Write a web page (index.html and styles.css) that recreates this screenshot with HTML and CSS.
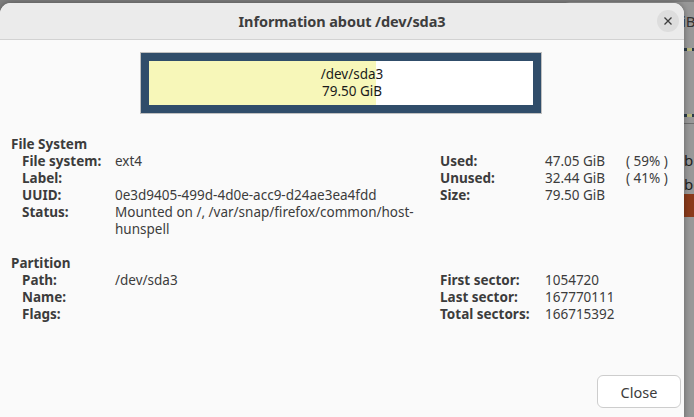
FILE: index.html
```html
<!DOCTYPE html>
<html>
<head>
<meta charset="utf-8">
<link rel="stylesheet" href="styles.css">
</head>
<body>
<div class="desktop">
  <div class="backwin">
    <div class="bw-top">iB</div>
    <div class="bw-dash bw-dash1"></div>
    <div class="bw-dash bw-dash2"></div>
    <div class="bw-line"></div>
    <div class="bw-text bw-t1">bi</div>
    <div class="bw-text bw-t2">bo</div>
    <div class="bw-bar"></div>
  </div>
  <div class="dialog">
    <div class="titlebar">
      <span class="title">Information about /dev/sda3</span>
      <button class="xbtn" aria-label="Close">
        <svg width="10" height="10" viewBox="0 0 10 10"><path d="M1.5 1.5L8.5 8.5M8.5 1.5L1.5 8.5" stroke="#3d3d3d" stroke-width="1.3" fill="none"/></svg>
      </button>
    </div>
    <div class="content">
      <div class="graphic">
        <div class="frame">
          <div class="used"></div>
          <div class="glabel">/dev/sda3<br>79.50 GiB</div>
        </div>
      </div>

      <div class="section fs">
        <div class="heading">File System</div>
        <div class="cols">
          <div class="grid left">
            <div class="lbl">File system:</div><div class="val">ext4</div>
            <div class="lbl">Label:</div><div class="val"></div>
            <div class="lbl">UUID:</div><div class="val">0e3d9405-499d-4d0e-acc9-d24ae3ea4fdd</div>
            <div class="lbl">Status:</div><div class="val">Mounted on /, /var/snap/firefox/common/host-<br>hunspell</div>
          </div>
          <div class="grid right3">
            <div class="lbl">Used:</div><div class="val">47.05 GiB</div><div class="pct">( 59% )</div>
            <div class="lbl">Unused:</div><div class="val">32.44 GiB</div><div class="pct">( 41% )</div>
            <div class="lbl">Size:</div><div class="val">79.50 GiB</div><div class="pct"></div>
          </div>
        </div>
      </div>

      <div class="section part">
        <div class="heading">Partition</div>
        <div class="cols">
          <div class="grid left">
            <div class="lbl">Path:</div><div class="val">/dev/sda3</div>
            <div class="lbl">Name:</div><div class="val"></div>
            <div class="lbl">Flags:</div><div class="val"></div>
          </div>
          <div class="grid right2">
            <div class="lbl">First sector:</div><div class="val">1054720</div>
            <div class="lbl">Last sector:</div><div class="val">167770111</div>
            <div class="lbl">Total sectors:</div><div class="val">166715392</div>
          </div>
        </div>
      </div>

      <div class="actions">
        <button class="closebtn">Close</button>
      </div>
    </div>
  </div>
</div>
</body>
</html>
```

FILE: styles.css
```css
* { box-sizing: border-box; }
html, body {
  margin: 0;
  padding: 0;
  width: 694px;
  height: 417px;
  overflow: hidden;
}
body {
  background: #7e7e7e;
  font-family: "Noto Sans", "DejaVu Sans", sans-serif;
  font-size: 13.5px;
  color: #3c3c3c;
}
.desktop {
  position: relative;
  width: 694px;
  height: 417px;
  overflow: hidden;
}
.backwin {
  position: absolute;
  left: 560px;
  top: 2px;
  width: 134px;
  height: 415px;
  background: #989898;
  border-radius: 10px 0 0 0;
  overflow: hidden;
}
.bw-top {
  position: absolute;
  left: 122px;
  top: 9px;
  font-size: 15px;
  color: #333;
}
.bw-dash {
  position: absolute;
  left: 124px;
  width: 80px;
  height: 3px;
  background: repeating-linear-gradient(90deg, #2a3b4a 0 3px, #b8b77e 3px 8px);
}
.bw-dash1 { top: 46px; }
.bw-dash2 { top: 112px; }
.bw-line {
  position: absolute;
  left: 124px;
  top: 121px;
  width: 80px;
  height: 1px;
  background: #6e6e6e;
}
.bw-text {
  position: absolute;
  left: 124px;
  font-size: 15px;
  color: #222;
}
.bw-t1 { top: 148px; }
.bw-t2 { top: 172px; }
.bw-bar {
  position: absolute;
  left: 124px;
  top: 192px;
  width: 80px;
  height: 23px;
  background: #8a3a1b;
}
.dialog {
  position: absolute;
  left: 0;
  top: 3px;
  width: 684px;
  height: 430px;
  background: #fafafa;
  border-radius: 11px 11px 0 0;
  overflow: hidden;
  box-shadow: 0 0 6px rgba(0,0,0,0.35);
}
.titlebar {
  position: relative;
  height: 37px;
  background: #ebebeb;
  border-bottom: 1px solid #d2d2d2;
  display: flex;
  align-items: center;
  justify-content: center;
}
.title {
  font-weight: bold;
  font-size: 14.5px;
  color: #3d3d3d;
  letter-spacing: -0.1px;
}
.xbtn {
  position: absolute;
  right: 5px;
  top: 7px;
  width: 22px;
  height: 22px;
  border-radius: 50%;
  border: none;
  background: #dddddd;
  padding: 0;
  display: flex;
  align-items: center;
  justify-content: center;
}
.content {
  padding: 12px 0 0 11px;
}
.graphic {
  width: 402px;
  height: 62px;
  margin: 0 auto 0 129px;
  border: 1px solid #c0c0c0;
}
.frame {
  position: relative;
  width: 100%;
  height: 100%;
  border: 8px solid #304d6a;
  background: #ffffff;
}
.used {
  position: absolute;
  left: 0;
  top: 0;
  bottom: 0;
  width: 227px;
  background: #f7f7b9;
}
.glabel {
  position: relative;
  text-align: center;
  line-height: 17px;
  padding-top: 5px;
  color: #1a1a1a;
  margin-left: 22px;
}
.section {
  line-height: 17px;
}
.fs { margin-top: 22px; }
.part { margin-top: 17px; }
.heading {
  font-weight: bold;
}
.cols {
  display: flex;
  align-items: flex-start;
  padding-left: 11px;
}
.grid {
  display: grid;
  column-gap: 0;
}
.left {
  grid-template-columns: 93px 325px;
}
.right3 {
  grid-template-columns: 105px 81px auto;
}
.right2 {
  grid-template-columns: 105px auto;
}
.lbl {
  font-weight: bold;
}
.val {
  color: #3c3c3c;
}
.pct {
  color: #3c3c3c;
  white-space: pre;
}
.actions {
  display: flex;
  justify-content: flex-end;
  padding-right: 3px;
  margin-top: 52px;
}
.closebtn {
  width: 84px;
  height: 33px;
  border: 1px solid #cdcdcd;
  border-radius: 6px;
  background: #ffffff;
  font-family: "Noto Sans", "DejaVu Sans", sans-serif;
  font-size: 14.5px;
  color: #3c3c3c;
}
```
